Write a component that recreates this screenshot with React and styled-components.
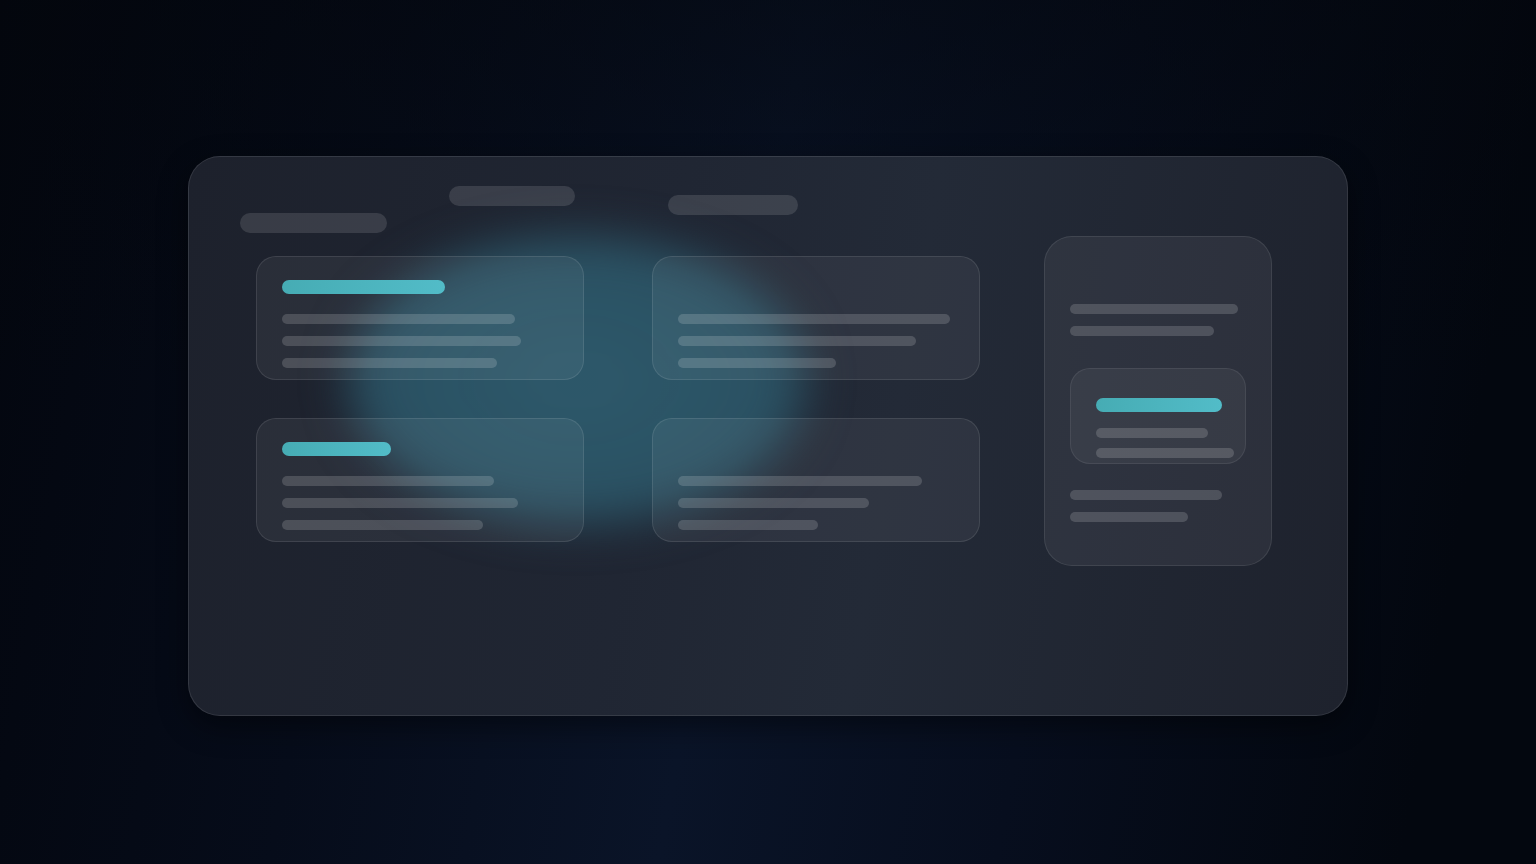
import React from "react";
import styled, { createGlobalStyle } from "styled-components";

const Global = createGlobalStyle`
  html, body { margin: 0; padding: 0; }
  body {
    font-family: "Inter", "Liberation Sans", sans-serif;
    background: #040810;
    min-height: 100vh;
    overflow: hidden;
  }
  * { box-sizing: border-box; }
`;

const Stage = styled.div`
  width: 100vw;
  height: 100vh;
  display: flex;
  justify-content: center;
  align-items: flex-start;
  padding-top: 156px;
  background:
    linear-gradient(180deg, rgba(3,6,12,0.55) 0%, rgba(3,6,12,0) 45%),
    linear-gradient(100deg, #03060e 0%, #060c1a 25%, #0a1428 48%, #070e1e 68%, #03070f 92%);
`;

const Panel = styled.div`
  position: relative;
  width: 1160px;
  height: 560px;
  border-radius: 32px;
  border: 1px solid rgba(255, 255, 255, 0.1);
  background: linear-gradient(100deg, #1d212c 0%, #202633 40%, #232a37 60%, #1e222d 100%);
  box-shadow: 0 10px 30px rgba(0, 0, 0, 0.45);
  overflow: hidden;
  padding-top: 29px;
`;

const Glow = styled.div`
  position: absolute;
  left: 158px;
  top: 78px;
  width: 460px;
  height: 290px;
  border-radius: 50%;
  background: radial-gradient(ellipse at 50% 50%, rgba(46, 92, 110, 0.95) 0%, rgba(44, 86, 104, 0.9) 60%, rgba(40, 78, 96, 0.65) 88%, rgba(40, 78, 96, 0) 100%);
  filter: blur(22px);
  pointer-events: none;
`;

const Header = styled.div`
  position: relative;
  display: flex;
  align-items: flex-start;
  height: 50px;
  padding-left: 51px;
`;

const Pill = styled.div`
  width: ${(p) => p.$w}px;
  height: 20px;
  border-radius: 10px;
  margin-top: ${(p) => p.$top}px;
  margin-left: ${(p) => p.$ml || 0}px;
  background: rgba(255, 255, 255, 0.12);
`;

const Body = styled.div`
  position: relative;
  display: flex;
  align-items: flex-start;
  gap: 64px;
  padding-left: 67px;
`;

const Grid = styled.div`
  margin-top: 20px;
  display: grid;
  grid-template-columns: 328px 328px;
  column-gap: 68px;
  row-gap: 38px;
`;

const Card = styled.div`
  height: 124px;
  border-radius: 20px;
  border: 1px solid rgba(255, 255, 255, 0.1);
  background: rgba(255, 255, 255, 0.055);
  padding: 23px 25px;
  display: flex;
  flex-direction: column;
`;

const Title = styled.div`
  width: ${(p) => p.$w}px;
  height: 14px;
  border-radius: 7px;
  background: ${(p) =>
    p.$empty ? "transparent" : "linear-gradient(90deg, #46acb4 0%, #52bcc8 100%)"};
  margin-bottom: ${(p) => p.$mb ?? 20}px;
  flex: none;
`;

const Line = styled.div`
  width: ${(p) => p.$w}px;
  height: 10px;
  border-radius: 5px;
  background: rgba(255, 255, 255, 0.16);
  margin-top: ${(p) => p.$mt ?? 12}px;
  flex: none;
`;

const Side = styled.div`
  width: 228px;
  height: 330px;
  border-radius: 28px;
  border: 1px solid rgba(255, 255, 255, 0.09);
  background: rgba(255, 255, 255, 0.06);
  padding: 67px 25px 0;
  display: flex;
  flex-direction: column;
`;

const Inner = styled.div`
  width: 176px;
  height: 96px;
  margin: 32px 0 26px;
  border-radius: 20px;
  border: 1px solid rgba(255, 255, 255, 0.08);
  background: rgba(255, 255, 255, 0.05);
  padding: 29px 25px 0;
  display: flex;
  flex-direction: column;
  flex: none;
`;

const cards = [
  { title: 163, lines: [233, 239, 215] },
  { title: 0, lines: [272, 238, 158] },
  { title: 109, lines: [212, 236, 201] },
  { title: 0, lines: [244, 191, 140] },
];

export default function App() {
  return (
    <>
      <Global />
      <Stage>
        <Panel>
          <Glow />
          <Header>
            <Pill $w={147} $top={27} />
            <Pill $w={126} $top={0} $ml={62} />
            <Pill $w={130} $top={9} $ml={93} />
          </Header>
          <Body>
            <Grid>
              {cards.map((c, i) => (
                <Card key={i}>
                  <Title $w={c.title || 100} $empty={!c.title} />
                  {c.lines.map((w, j) => (
                    <Line key={j} $w={w} $mt={j === 0 ? 0 : 12} />
                  ))}
                </Card>
              ))}
            </Grid>
            <Side>
              <Line $w={168} $mt={0} />
              <Line $w={144} />
              <Inner>
                <Title $w={126} $mb={16} />
                <Line $w={112} $mt={0} />
                <Line $w={138} $mt={10} />
              </Inner>
              <Line $w={152} $mt={0} />
              <Line $w={118} />
            </Side>
          </Body>
        </Panel>
      </Stage>
    </>
  );
}
